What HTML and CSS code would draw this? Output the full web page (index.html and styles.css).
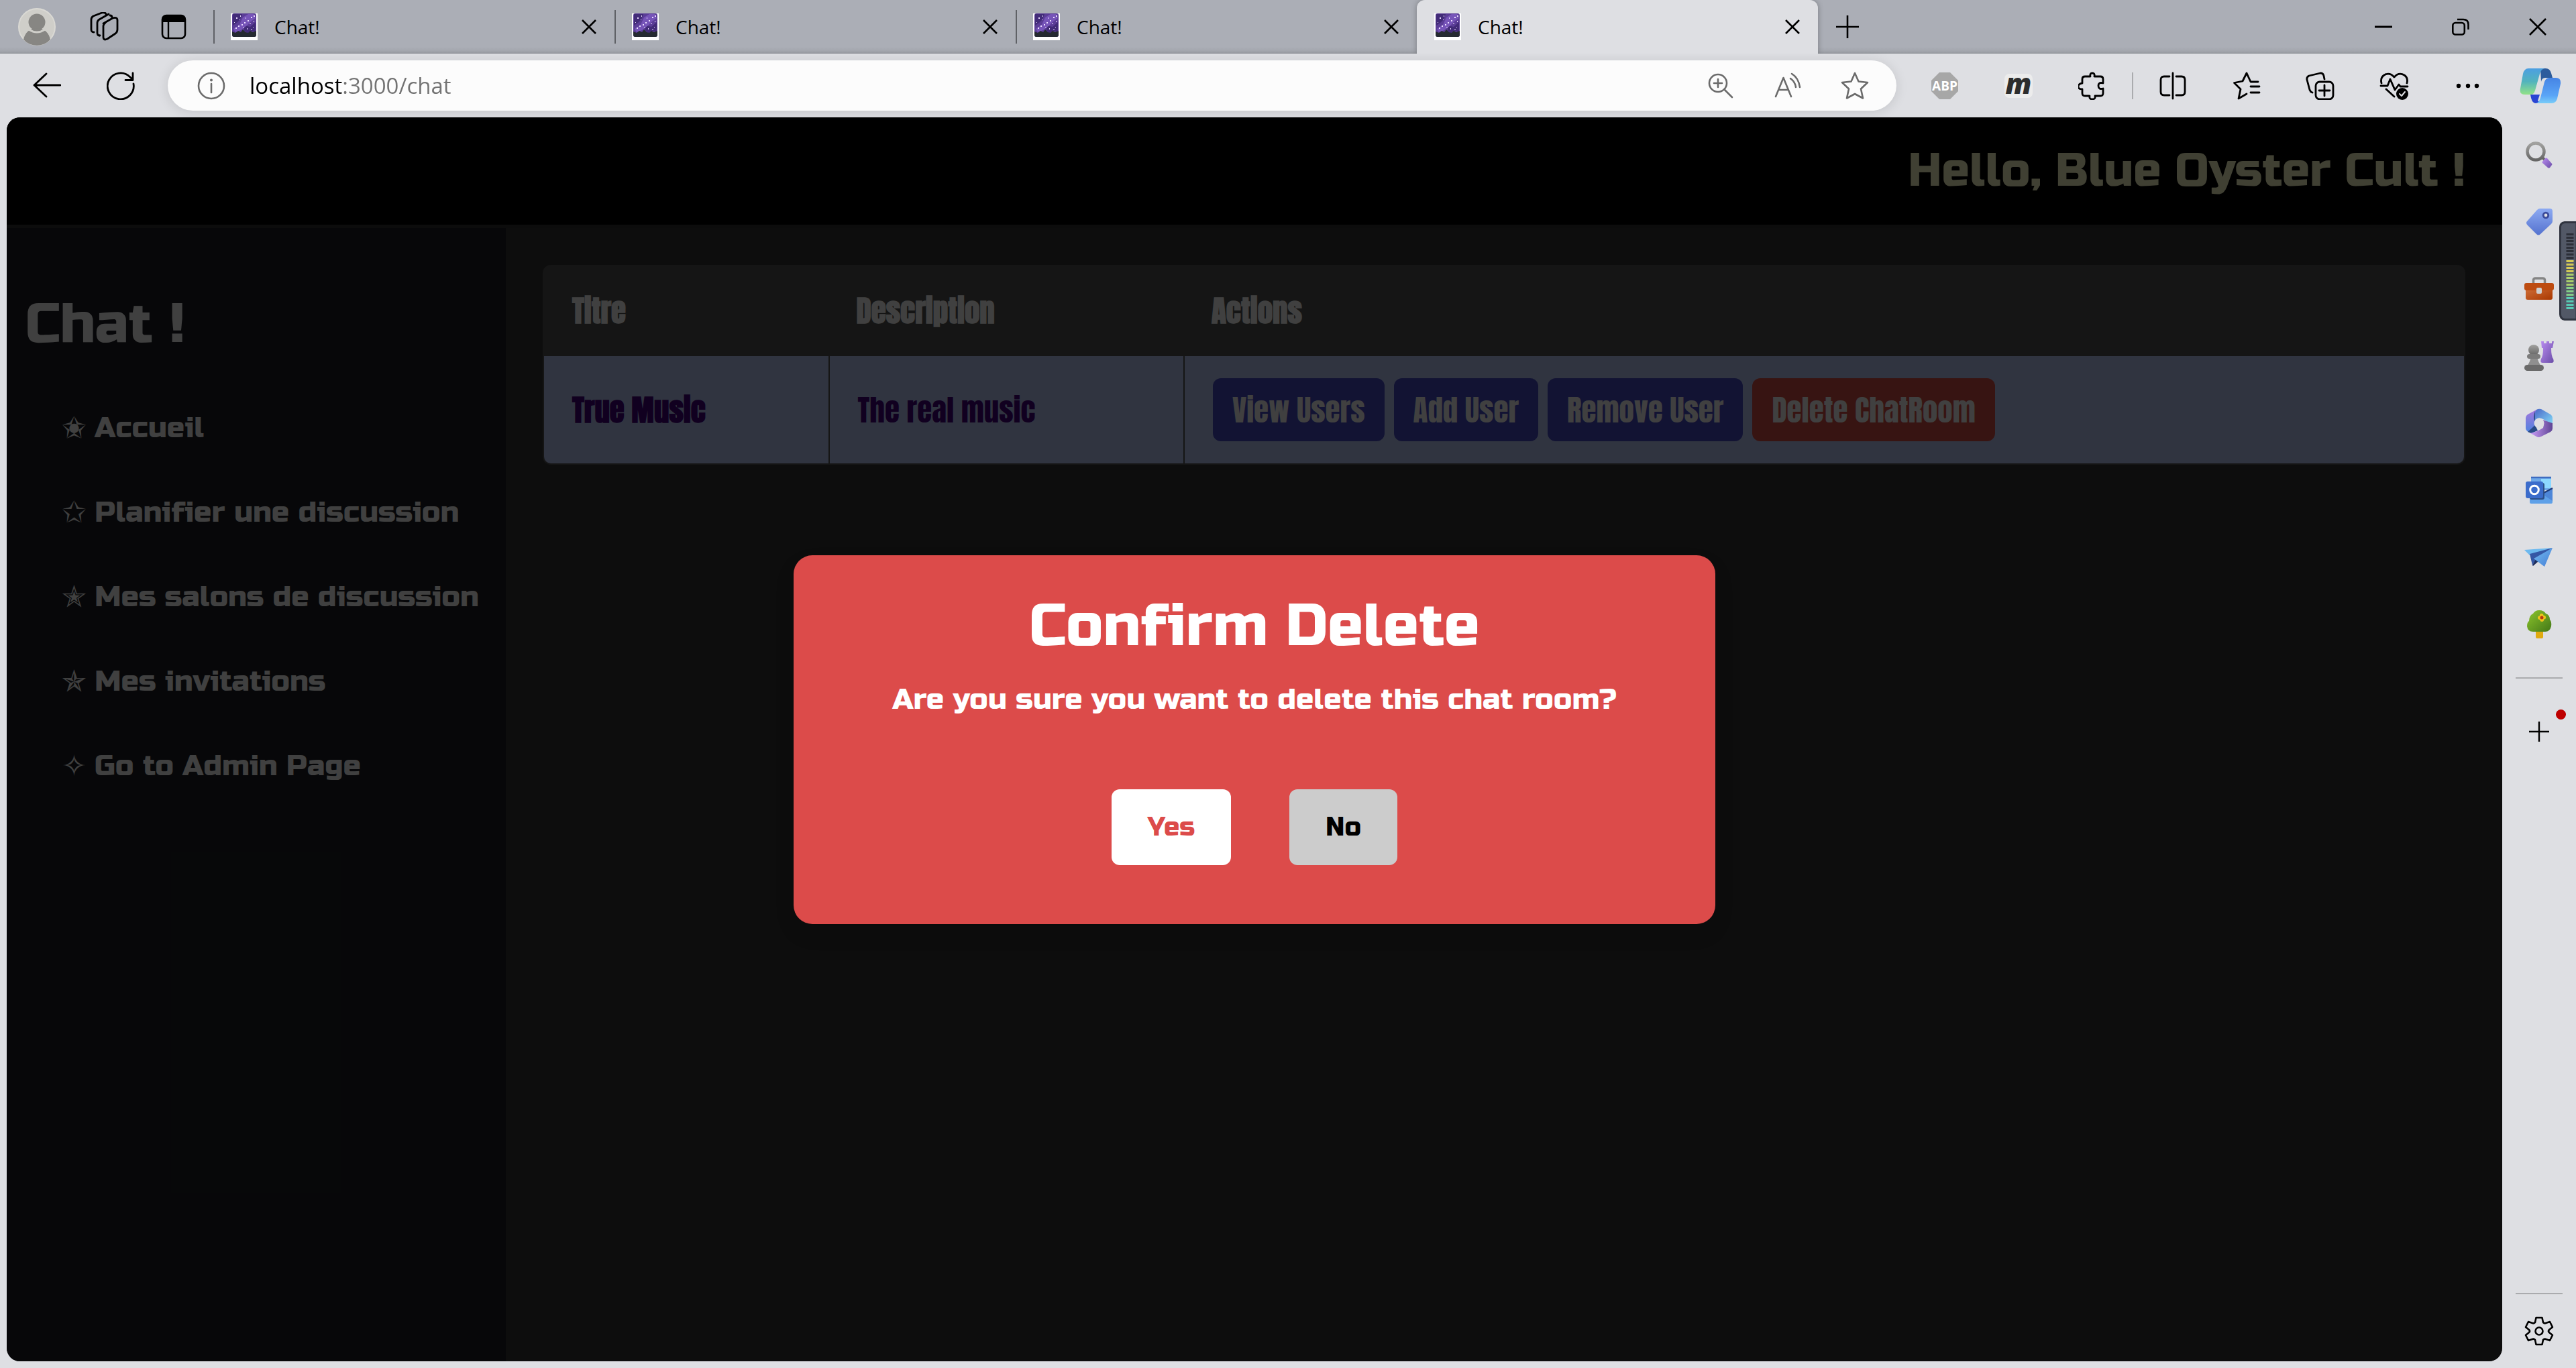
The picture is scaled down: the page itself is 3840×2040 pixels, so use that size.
FILE: index.html
```html
<!DOCTYPE html>
<html lang="fr">
<head>
<meta charset="utf-8">
<meta name="viewport" content="width=device-width, initial-scale=1">
<title>Chat!</title>
<link rel="stylesheet" href="styles.css">
</head>
<body>
<svg class="defs" aria-hidden="true">
  <defs>
    <linearGradient id="g-grey" x1="0" y1="0" x2="0" y2="1"><stop offset="0" stop-color="#a2a2a0"/><stop offset="1" stop-color="#666"/></linearGradient>
    <linearGradient id="g-violet" x1="0" y1="0" x2="1" y2="1"><stop offset="0" stop-color="#b98cf0"/><stop offset="1" stop-color="#6b4ea8"/></linearGradient>
    <linearGradient id="g-tag" x1="0" y1="0" x2="0" y2="1"><stop offset="0" stop-color="#8daaf2"/><stop offset="1" stop-color="#5472cf"/></linearGradient>
    <linearGradient id="g-box" x1="0" y1="0" x2="1" y2="1"><stop offset="0" stop-color="#d0703a"/><stop offset="1" stop-color="#a93700"/></linearGradient>
    <linearGradient id="g-m1" x1="0" y1="0" x2="0" y2="1"><stop offset="0" stop-color="#a477dc"/><stop offset="1" stop-color="#4a83e0"/></linearGradient>
    <linearGradient id="g-m2" x1="0" y1="0" x2="1" y2="1"><stop offset="0" stop-color="#4b68c8"/><stop offset="1" stop-color="#84dcf8"/></linearGradient>
    <linearGradient id="g-m3" x1="0" y1="0" x2="1" y2="0"><stop offset="0" stop-color="#c89bf6"/><stop offset="1" stop-color="#5f4595"/></linearGradient>
    <linearGradient id="g-plane" x1="0" y1="0" x2="1" y2="1"><stop offset="0" stop-color="#74bdf0"/><stop offset="1" stop-color="#447dd6"/></linearGradient>
    <linearGradient id="g-tree" x1="0" y1="0" x2="1" y2="1"><stop offset="0" stop-color="#8dc52c"/><stop offset="1" stop-color="#437817"/></linearGradient>
    <linearGradient id="g-c1" x1="0" y1="0" x2="0" y2="1"><stop offset="0" stop-color="#4c9fe2"/><stop offset=".5" stop-color="#52b3bd"/><stop offset="1" stop-color="#92e288"/></linearGradient>
    <linearGradient id="g-c2" x1="0" y1="0" x2="0" y2="1"><stop offset="0" stop-color="#4684e4"/><stop offset=".7" stop-color="#5aa5f7"/><stop offset="1" stop-color="#79cdf8"/></linearGradient>
    <symbol id="favicon" viewBox="0 0 40 40">
      <rect width="40" height="40" fill="#fff"/>
      <rect x="2" y="0" width="36" height="35" rx="3" fill="#5b3d97"/>
      <path d="M3 1h14l-3 8-5 5-6 4zM20 18l9 2 8-7v15l-6-2-5 4-6-4z" fill="#422b78"/>
      <path d="M18 6l8-5h8l3 6-7 5-6 6-9 7-8 3-3-5 9-6z" fill="#7654b8"/>
      <path d="M2 27l5 2 4-3 4 2 3-4 4 4 4 1 3-3 4 2 5-2v6a3 3 0 0 1-3 3H5a3 3 0 0 1-3-3z" fill="#252a31"/>
      <g fill="#eadcff"><path d="M8 6h2v2H8zM14 3h1v2h-1zM20 13h2v2h-2zM25 10h2v2h-2zM30 5h2v2h-2zM34 3h2v2h-2zM16 16h2v2h-2zM11 18h2v2h-2zM7 21h2v2H7zM22 6h1v2h-1zM28 15h2v1h-2zM34 11h1v2h-1zM18 20h2v1h-2zM24 22h1v2h-1zM30 24h2v1h-2zM33 20h1v1h-1zM5 13h1v1H5zM13 9h1v1h-1z"/></g>
    </symbol>
    <symbol id="close" viewBox="0 0 24 24"><path d="M2 2l20 20M22 2L2 22" fill="none" stroke="#000" stroke-width="2.6"/></symbol>
  </defs>
</svg>

<header class="tabstrip">
  <div class="tabstrip-tools">
    <button class="tool tool-profile" aria-label="Profil">
      <svg width="56" height="56" viewBox="0 0 56 56"><circle cx="28" cy="28" r="27" fill="#cfcec9" stroke="#dad9d4" stroke-width="2"/><circle cx="28" cy="21" r="12.500" fill="#878683"/><path d="M8 45c2-10 9-17 20-17s18 7 20 17a27 27 0 0 1-40 0z" fill="#878683" transform="translate(0 2)"/><path d="M16 32q12 8 24 0" stroke="#cfcec9" stroke-width="3" fill="none"/></svg>
    </button>
    <button class="tool tool-spaces" aria-label="Espaces de travail">
      <svg width="44" height="44" viewBox="0 0 44 44" fill="none" stroke="#000" stroke-width="2.800" stroke-linejoin="round" stroke-linecap="round"><path d="M21 17l14-8q7-2 7 3v14q0 4-3 6l-12 8q-6 3-6-3V21q0-3 3-5z"/><path d="M15 35q-3 0-3-4V16q0-3 3-5l14-8"/><path d="M7 30q-4 0-4-4V11q0-3 3-5l13-5q5-1 6 2M15 35l1 0M31 5q3 0 3 3"/></svg>
    </button>
    <button class="tool tool-tabs" aria-label="Onglets verticaux">
      <svg width="38" height="38" viewBox="0 0 38 38"><rect x="2" y="2" width="34" height="34" rx="6" fill="none" stroke="#000" stroke-width="2.600"/><path d="M2 12V8a6 6 0 0 1 6-6h22a6 6 0 0 1 6 6v4z"/><path d="M11 11v25" stroke="#000" stroke-width="2.400"/></svg>
    </button>
  </div>
  <nav class="tabs" aria-label="Onglets">
    <div class="tab"><a class="tab-link" href="#"><svg class="favicon"><use href="#favicon"/></svg>Chat!</a><button class="tab-close" aria-label="Fermer"><svg width="24" height="24"><use href="#close"/></svg></button></div>
    <div class="tab"><a class="tab-link" href="#"><svg class="favicon"><use href="#favicon"/></svg>Chat!</a><button class="tab-close" aria-label="Fermer"><svg width="24" height="24"><use href="#close"/></svg></button></div>
    <div class="tab"><a class="tab-link" href="#"><svg class="favicon"><use href="#favicon"/></svg>Chat!</a><button class="tab-close" aria-label="Fermer"><svg width="24" height="24"><use href="#close"/></svg></button></div>
    <div class="tab tab-active"><a class="tab-link" href="#" aria-current="page"><svg class="favicon"><use href="#favicon"/></svg>Chat!</a><button class="tab-close" aria-label="Fermer"><svg width="24" height="24"><use href="#close"/></svg></button></div>
    <button class="tab-new" aria-label="Nouvel onglet"><svg width="36" height="36" viewBox="0 0 36 36"><path d="M18 1v34M1 18h34" stroke="#000" stroke-width="2.600"/></svg></button>
  </nav>
  <div class="window-controls">
    <button class="window-button" aria-label="Réduire"><svg width="26" height="26" viewBox="0 0 26 26"><path d="M0 13h26" stroke="#000" stroke-width="3"/></svg></button>
    <button class="window-button" aria-label="Restaurer"><svg width="26" height="26" viewBox="0 0 26 26" fill="none" stroke="#000" stroke-width="2.600"><rect x="1.300" y="7" width="17.500" height="17.500" rx="4"/><path d="M8 2h9q7.500 0 7.500 7.500V17" /></svg></button>
    <button class="window-button" aria-label="Fermer la fenêtre"><svg width="26" height="26" viewBox="0 0 26 26"><path d="M1 1l24 24M25 1L1 25" stroke="#000" stroke-width="2.600"/></svg></button>
  </div>
</header>

<div class="toolbar">
  <button class="tb" aria-label="Retour"><svg width="42" height="42" viewBox="0 0 42 42" fill="none" stroke="#000" stroke-width="2.800" stroke-linecap="round" stroke-linejoin="round"><path d="M41 20H2M20 3L2 20l18 17"/></svg></button>
  <button class="tb" aria-label="Actualiser"><svg width="42" height="42" viewBox="0 0 42 42" fill="none" stroke="#000" stroke-width="2.800" stroke-linecap="round" stroke-linejoin="round"><path d="M40 18a19.500 19.500 0 1 1-5-10l4 4M39 2v10.500H28"/></svg></button>
  <div class="address">
    <svg width="42" height="42" viewBox="0 0 42 42" fill="none" stroke="#6b6b6b" stroke-width="2.600"><circle cx="21" cy="21" r="19"/><path d="M21 18v13" stroke-linecap="round"/><circle cx="21" cy="12.500" r="2" fill="#6b6b6b" stroke="none"/></svg>
    <input class="address-input" type="text" aria-label="Adresse" value="localhost:3000/chat">
    <div class="address-actions">
      <button class="ab" aria-label="Zoom"><svg width="40" height="40" viewBox="0 0 40 40" fill="none" stroke="#6b6b6b" stroke-width="2.600" stroke-linecap="round"><circle cx="16" cy="16" r="13"/><path d="M25.500 25.500L37 37M16 10v12M10 16h12"/></svg></button>
      <button class="ab" aria-label="Lecture à voix haute"><svg width="40" height="40" viewBox="0 0 40 40" fill="none" stroke="#6b6b6b" stroke-width="2.600" stroke-linecap="round" stroke-linejoin="round"><path d="M2 36L13.500 8 25 36M6 26h15M24 9q7 5 8 13M26 2q10 6 12 20"/></svg></button>
      <button class="ab" aria-label="Ajouter aux favoris"><svg width="42" height="42" viewBox="0 0 42 42" fill="none" stroke="#6b6b6b" stroke-width="2.600" stroke-linejoin="round"><path d="M21 2l5.500 12.500L40 16 30 25.500 33 39.500 21 33 9 39.500 12 25.500 2 16l13.500-1.500z"/></svg></button>
    </div>
  </div>
  <div class="toolbar-right">
    <button class="tb" aria-label="Adblock Plus"><svg width="42" height="42" viewBox="0 0 42 42"><path d="M13 1h16l12 12v16L29 41H13L1 29V13z" fill="#a7a7a7"/><text x="21" y="28" text-anchor="middle" class="abp">ABP</text></svg></button>
    <button class="tb" aria-label="Extension m"><span class="ext-m">m</span></button>
    <button class="tb" aria-label="Extensions"><svg width="42" height="42" viewBox="0 0 42 42" fill="none" stroke="#000" stroke-width="2.800" stroke-linejoin="round"><path d="M10 7h8q-1-5 3-5t3 5h9q4 0 4 4v6q-7-2-7 4t7 4v7q0 4-4 4h-8q1 5-4 5t-4-5h-7q-4 0-4-4v-6q-6 0-6-4t6-5v-6q0-4 4-4z"/></svg></button>
    <span class="toolbar-rule"></span>
    <button class="tb" aria-label="Fractionner l'écran"><svg width="42" height="42" viewBox="0 0 42 42" fill="none" stroke="#000" stroke-width="2.800" stroke-linecap="round"><path d="M21 2v38M16 7H8q-5 0-5 5v18q0 5 5 5h8M26 7h8q5 0 5 5v18q0 5-5 5h-8"/></svg></button>
    <button class="tb" aria-label="Favoris"><svg width="42" height="42" viewBox="0 0 42 42" fill="none" stroke="#000" stroke-width="2.800" stroke-linecap="round" stroke-linejoin="round"><path d="M38 15H27L21 2l-6 12-12.500 2.500L12 26 9 40l12-7M27 22h13M27 31h13"/></svg></button>
    <button class="tb" aria-label="Collections"><svg width="44" height="42" viewBox="0 0 44 42" fill="none" stroke="#000" stroke-width="2.800" stroke-linecap="round" stroke-linejoin="round"><path d="M10 31q-3-1-4-4L2 12q-1-4 3-6L22 2q4 0 5 4l1 5"/><rect x="15" y="15" width="26" height="26" rx="6"/><path d="M28 20v16M20 28h16"/></svg></button>
    <button class="tb" aria-label="Performances"><svg width="44" height="42" viewBox="0 0 44 42" fill="none" stroke="#000" stroke-width="2.800" stroke-linecap="round" stroke-linejoin="round"><path d="M3 17Q1 9 7 5q8-5 15 3 7-8 15-3 6 4 4 12M2 21h10l4-10 7 16 6-8 2 3h11M10 26l12 11"/><circle cx="34" cy="33" r="9" fill="#000" stroke="none"/><path d="M30 33l3 3 5-6" stroke="#dedfe3" stroke-width="2"/></svg></button>
    <button class="tb" aria-label="Paramètres et plus"><svg width="42" height="42" viewBox="0 0 42 42"><circle cx="7" cy="21" r="3.200"/><circle cx="21" cy="21" r="3.200"/><circle cx="34" cy="21" r="3.200"/></svg></button>
    <button class="tb tb-copilot" aria-label="Copilot"><svg width="62" height="54" viewBox="0 0 62 54"><path d="M31 1h8q6 0 8 7l2 7H38q-5 0-6 6z" fill="#2d5c9c"/><path d="M16 40h14l-3 9q4 4 8 4H24q-5 0-7-8z" fill="#2a45d3"/><path d="M13 1h24q-5 1-7 8l-7 25q-2 6-6 6H8q-9 0-7-9l4-22q2-8 8-8z" fill="url(#g-c1)"/><path d="M48 53H24q5-1 7-8l6-24q2-6 7-6h10q8 0 7 9l-5 22q-2 7-8 7z" fill="url(#g-c2)"/></svg></button>
  </div>
</div>

<div class="shell">
  <div class="viewport">
    <header class="app-header"><p class="greeting">Hello, Blue Oyster Cult !</p></header>
    <div class="app-body">
      <nav class="app-nav" aria-label="Navigation">
        <h1 class="brand">Chat !</h1>
        <ul class="menu">
          <li><a class="menu-link" href="#"><span class="star">✬</span>Accueil</a></li>
          <li><a class="menu-link" href="#"><span class="star">✩</span>Planifier une discussion</a></li>
          <li><a class="menu-link" href="#"><span class="star">✭</span>Mes salons de discussion</a></li>
          <li><a class="menu-link" href="#"><span class="star">✯</span>Mes invitations</a></li>
          <li><a class="menu-link" href="#"><span class="star">✧</span>Go to Admin Page</a></li>
        </ul>
      </nav>
      <main class="content">
        <div class="table-frame">
          <table class="rooms">
            <thead><tr><th class="col-title">Titre</th><th class="col-description">Description</th><th>Actions</th></tr></thead>
            <tbody>
              <tr>
                <td class="room-name">True Music</td>
                <td>The real music</td>
                <td>
                  <div class="actions">
                    <button class="action">View Users</button>
                    <button class="action">Add User</button>
                    <button class="action">Remove User</button>
                    <button class="action action-danger">Delete ChatRoom</button>
                  </div>
                </td>
              </tr>
            </tbody>
          </table>
        </div>
      </main>
    </div>
    <div class="overlay">
      <section class="modal" role="dialog" aria-modal="true" aria-labelledby="modal-title">
        <h2 class="modal-title" id="modal-title">Confirm Delete</h2>
        <p class="modal-text">Are you sure you want to delete this chat room?</p>
        <div class="modal-actions">
          <button class="choice choice-yes">Yes</button>
          <button class="choice choice-no">No</button>
        </div>
      </section>
    </div>
  </div>

  <aside class="sidebar">
    <button class="side" aria-label="Recherche"><svg width="44" height="44" viewBox="0 0 44 44"><path d="M25 24l6 6" stroke="#666" stroke-width="4"/><circle cx="17" cy="17" r="12.500" fill="none" stroke="url(#g-grey)" stroke-width="4.500"/><path d="M27 32l4-5q2-1 3 0l7 8q1 1 0 2l-3 4q-2 1-3 0l-8-7q-1-1 0-2z" fill="url(#g-violet)"/></svg></button>
    <button class="side" aria-label="Achats"><svg width="44" height="44" viewBox="0 0 44 44"><path d="M23 2h15q4 0 4 4v15q0 2-2 4L24 40q-3 3-6 0L4 26q-2-3 0-5L19 4q2-2 4-2z" fill="url(#g-tag)"/><circle cx="32" cy="12" r="3.800" fill="#dedfe3" stroke="#3a4a9a" stroke-width="2.800"/></svg></button>
    <button class="side" aria-label="Outils"><svg width="44" height="44" viewBox="0 0 44 44"><path d="M13.500 14V9q0-3 3-3h11q3 0 3 3v5" fill="none" stroke="#858585" stroke-width="3.500"/><path d="M2 20h40v15q0 3-3 3H5q-3 0-3-3z" fill="url(#g-box)"/><rect y="13" width="44" height="11" rx="3" fill="#bd4b10"/><rect x="18" y="20" width="8" height="9" rx="2" fill="#cfcfcf"/></svg></button>
    <button class="side" aria-label="Jeux"><svg width="44" height="44" viewBox="0 0 44 44"><path d="M25 0h4v3h4V0h4v3h4V0h3l-2 10h-2q0 12 3 16 2 6-2 6H27q-4 0-2-6 3-4 3-16h-2z" fill="url(#g-violet)"/><circle cx="14" cy="13" r="8" fill="url(#g-grey)"/><path d="M10 22h9q1 8 6 15H4q5-7 6-15z" fill="#8f8f8f"/><rect x="4" y="19" width="20" height="7" rx="3.500" fill="#7b7b7b"/><rect y="35" width="29" height="9" rx="4.500" fill="#6a6a6a"/></svg></button>
    <button class="side" aria-label="Microsoft 365"><svg width="44" height="44" viewBox="0 0 44 44"><path d="M18 2L5 9q-3 2-3 5v15q0 4 4 6l5 2 6-3V4z" fill="url(#g-m1)"/><path d="M16 4q-3 8-1 14v8l-10 9 5 2 10-4-4-8V5z" fill="#284a86"/><path d="M18 2q3-2 7-1l14 8q3 2 3 6v10L28 16q-7-4-12 2V8q0-4 2-6z" fill="url(#g-m2)"/><path d="M42 22v8q0 3-3 5l-14 7q-4 2-7 0l-9-5q12-3 19-8 2-5-1-12z" fill="url(#g-m3)"/><circle cx="22" cy="22" r="7.500" fill="#dedfe3"/></svg></button>
    <button class="side" aria-label="Outlook"><svg width="44" height="44" viewBox="0 0 44 44"><rect x="10" y="2" width="30" height="20" rx="2" fill="#6fa9e8"/><path d="M25 5h15v14H25z" fill="#8dd8ff"/><path d="M10 3h30" stroke="#3e6cc0" stroke-width="2.500"/><path d="M8 26l18 3 16-10v21q0 2-2 2H10q-2 0-2-2z" fill="#5ea0e8"/><path d="M42 19v19L27 28z" fill="#4d86d8"/><path d="M27 27l15-8" stroke="#1e3a78" stroke-width="2"/><rect x="8" y="11" width="22" height="25" rx="3" fill="#2c4f88"/><rect x="2" y="9" width="26" height="25" rx="3" fill="#3b6ccb"/><circle cx="15" cy="21.500" r="6.300" fill="none" stroke="#fff" stroke-width="3"/></svg></button>
    <button class="side" aria-label="Envoyer"><svg width="44" height="44" viewBox="0 0 44 44"><path d="M0 11l42-3-34 11z" fill="#6db9ef"/><path d="M8 17L42 8 18 24l-6 10z" fill="#3457a5"/><path d="M12 34l6-11 3 5-8 7z" fill="#1d2d5c"/><path d="M42 8L30 36 14 24z" fill="url(#g-plane)"/></svg></button>
    <button class="side" aria-label="Arbre"><svg width="44" height="44" viewBox="0 0 44 44"><rect x="17" y="30" width="11" height="13" rx="2" fill="#e0aa10"/><path d="M22 1q7 0 10 5 6 2 6 9 3 3 2 10-2 8-9 8H13q-8 0-9-8 0-6 3-8 0-8 6-11 3-5 9-5z" fill="url(#g-tree)"/><path d="M26 6c3 0 2 3 3 3s3 0 3 3-3 2-3 3 0 3-3 3-2-3-3-3-3 0-3-3 3-2 3-3 0-3 3-3z" fill="#f0c41b"/><circle cx="26" cy="12" r="2.500" fill="#b53d12"/></svg></button>
    <hr class="side-rule">
    <button class="side side-add" aria-label="Personnaliser"><svg width="32" height="32" viewBox="0 0 32 32"><path d="M16 1v30M1 16h30" stroke="#000" stroke-width="2.400"/></svg><span class="side-badge"></span></button>
    <hr class="side-rule side-rule-end">
    <button class="side side-settings" aria-label="Paramètres"><svg width="44" height="44" viewBox="0 0 44 44" fill="none" stroke="#000" stroke-width="2.600" stroke-linejoin="round"><path d="M17.500 2h9l1.500 7q2 2 4 1l6-2 4 8-5 4q-2 2 0 4l5 4-4 8-6-2q-2-1-4 1l-1.500 7h-9L16 35q-2-2-4-1l-6 2-4-8 5-4q2-2 0-4l-5-4 4-8 6 2q2 1 4-1z"/><circle cx="22" cy="22" r="5.500"/></svg></button>
  </aside>
</div>

<div class="meter" aria-hidden="true"><svg width="25" height="148" viewBox="0 0 25 148"><path d="M26 1.500H8q-6.500 1-6.500 7v130q0 7 6.500 8h18z" fill="#525866" stroke="#30343f" stroke-width="3"/>
  <path d="M16 18V58" stroke="#2c2f38" stroke-width="11" stroke-dasharray="3 2"/>
  <path d="M16 58V78" stroke="#d5cb55" stroke-width="11" stroke-dasharray="3 2"/>
  <path d="M16 78V98" stroke="#abd06b" stroke-width="11" stroke-dasharray="3 2"/>
  <path d="M16 98V113" stroke="#84d088" stroke-width="11" stroke-dasharray="3 2"/>
  <path d="M16 113V132" stroke="#57cbb4" stroke-width="11" stroke-dasharray="3 2"/></svg></div>
</body>
</html>
```
FILE: styles.css
```css
* { box-sizing: border-box; }

body {
  margin: 0;
  min-height: 100vh;
  display: flex;
  flex-direction: column;
  background: #dedfe3;
  font-family: "Segoe UI", "Open Sans", "Noto Sans", sans-serif;
}

button {
  display: flex;
  align-items: center;
  justify-content: center;
  padding: 0;
  border: 0;
  background: none;
  font: inherit;
  color: inherit;
}

svg { display: block; flex: none; }
.defs { position: absolute; width: 0; height: 0; }

/* Tab strip */
.tabstrip {
  display: flex;
  height: 80px;
  background: linear-gradient(#abaeb6 70px, #a3a6ad 76px, #94979d);
}
.tabstrip-tools { display: flex; width: 318px; }
.tool-profile { width: 110px; }
.tool-spaces { width: 90px; }
.tool-tabs { width: 118px; }
.tabs { display: flex; flex: 1; min-width: 0; }
.tab {
  position: relative;
  display: flex;
  align-items: center;
  flex: 0 1 598px;
  gap: 24px;
}
.tab::before { content: ""; width: 2px; height: 50px; background: #5f6166; }
.tab-link {
  display: flex;
  align-items: center;
  flex: 1;
  gap: 25px;
  color: #000;
  font-size: 28px;
  text-decoration: none;
}
.favicon { width: 40px; height: 40px; }
.tab-close { width: 40px; height: 40px; margin-right: 18px; }
.tab-active {
  background: #dedfe3;
  border-radius: 12px 12px 0 0;
  box-shadow: 0 0 8px rgba(0, 0, 0, 0.3);
  clip-path: inset(0 -12px);
}
.tab-active::before { background: none; }
.tab-new { width: 88px; }
.window-controls { display: flex; }
.window-button { width: 115px; }

/* Toolbar */
.toolbar {
  display: flex;
  align-items: center;
  height: 95px;
  padding-left: 15px;
}
.tb { width: 110px; height: 75px; }
.tb-copilot { width: 106px; }
.address {
  display: flex;
  align-items: center;
  flex: 1;
  min-width: 0;
  height: 75px;
  margin: 0 17px 0 15px;
  padding-left: 44px;
  border-radius: 38px;
  background: #fcfcfc;
  box-shadow: 0 2px 18px rgba(0, 0, 0, 0.12);
}
.address-input {
  flex: 1;
  min-width: 0;
  height: 60px;
  margin-left: 36px;
  padding: 0;
  border: 0;
  outline: 0;
  font: 33px "Segoe UI", "Open Sans", "Noto Sans", sans-serif;
  color: transparent;
  background: linear-gradient(to right, #000 139px, #737373 139px);
  -webkit-background-clip: text;
  background-clip: text;
}
.address-actions { display: flex; padding-right: 12px; }
.ab { width: 100px; height: 60px; }
.toolbar-right { display: flex; align-items: center; }
.toolbar-rule { width: 2px; height: 40px; margin: 0 4px; background: #aaabae; }
.abp { font: 700 19px "Open Sans", sans-serif; fill: #fff; }
.ext-m {
  padding: 0 2px 8px;
  border-radius: 7px;
  background: #ececec;
  font-size: 42px;
  font-style: italic;
  font-weight: 800;
  line-height: 28px;
  color: #2d2d2d;
}

/* Browser body */
.shell { display: flex; flex: 1; }
.viewport {
  position: relative;
  display: flex;
  flex-direction: column;
  flex: 1;
  min-width: 0;
  margin: 0 0 10px 10px;
  border-radius: 20px;
  overflow: hidden;
  background: #343434;
  color: #fff;
  font-family: "Russo One", Inter, "DejaVu Sans", sans-serif;
  font-weight: 400;
}

.app-header {
  padding: 32px 55px 32px;
  border-bottom: 5px solid #303030;
  background: #000;
}
.greeting {
  margin: 0;
  color: #ffffcc;
  font-size: 69px;
  line-height: 96px;
  text-align: right;
}
.app-body { display: flex; flex: 1; }
.app-nav { width: 20%; padding: 95px 24px 0 28px; background: #1c1e24; }
.brand { margin: 0 0 44px; font-size: 83px; font-weight: 400; line-height: 96px; }
.menu { margin: 0; padding: 0 0 0 54px; list-style: none; }
.menu-link {
  display: flex;
  color: #fff;
  font-size: 44px;
  line-height: 126px;
  text-decoration: none;
  white-space: nowrap;
}
.star { width: 49px; font-family: "Segoe UI Symbol", "DejaVu Sans", sans-serif; }

.content { flex: 1; min-width: 0; padding: 55px; }
.table-frame {
  border: 2px solid #545454;
  border-top: 0;
  border-radius: 12px;
  background: #545454;
  overflow: hidden;
}
.rooms {
  width: 100%;
  border-collapse: separate;
  border-spacing: 0;
  table-layout: fixed;
  font-family: Impact, Anton, "DejaVu Sans Condensed", sans-serif;
  font-size: 45px;
  text-align: left;
}
.rooms th { height: 136px; padding: 0 42px; }
.rooms td { height: 160px; padding: 0 42px; background: #c0d0ff; color: #440080; }
.rooms td + td { border-left: 2px solid #545454; }
.rooms .room-name { font-weight: 700; }
.col-title { width: 14.8%; }
.col-description { width: 18.5%; }
.actions { display: flex; gap: 14px; }
.action {
  height: 94px;
  padding: 0 29px;
  border-radius: 12px;
  background: #484ccc;
  color: #fff;
  white-space: nowrap;
}
.action-danger { background: #dc5048; }

.overlay {
  position: absolute;
  inset: 0;
  display: flex;
  align-items: center;
  justify-content: center;
  background: rgba(0, 0, 0, 0.75);
}
.modal {
  padding: 58px 147px 88px;
  border-radius: 28px;
  background: #dc4b4a;
  box-shadow: 0 14px 30px rgba(0, 0, 0, 0.1);
  text-align: center;
}
.modal-title { margin: 0; font-size: 88px; font-weight: 400; line-height: 96px; }
.modal-text { margin: 30px 0 103px; font-size: 44px; line-height: 62px; }
.modal-actions { display: flex; justify-content: center; gap: 87px; }
.choice { height: 113px; padding: 0 54px; border-radius: 12px; font-size: 39px; }
.choice-yes { background: #fff; color: #dc4b4a; }
.choice-no { background: #cccccc; color: #000; }

/* Browser side bar */
.sidebar {
  display: flex;
  flex-direction: column;
  align-items: center;
  width: 110px;
  padding-top: 6px;
}
.side { position: relative; width: 110px; height: 100px; flex: none; }
.side-rule { width: 70px; height: 2px; margin: 29px 0; border: 0; background: #aaabae; }
.side-rule-end { margin: auto 0 0; }
.side-badge {
  position: absolute;
  top: 17px;
  right: 15px;
  width: 15px;
  height: 15px;
  border-radius: 50%;
  background: #be0000;
}
.side-settings { height: 110px; }

.meter { position: fixed; top: 330px; right: 0; }
```
